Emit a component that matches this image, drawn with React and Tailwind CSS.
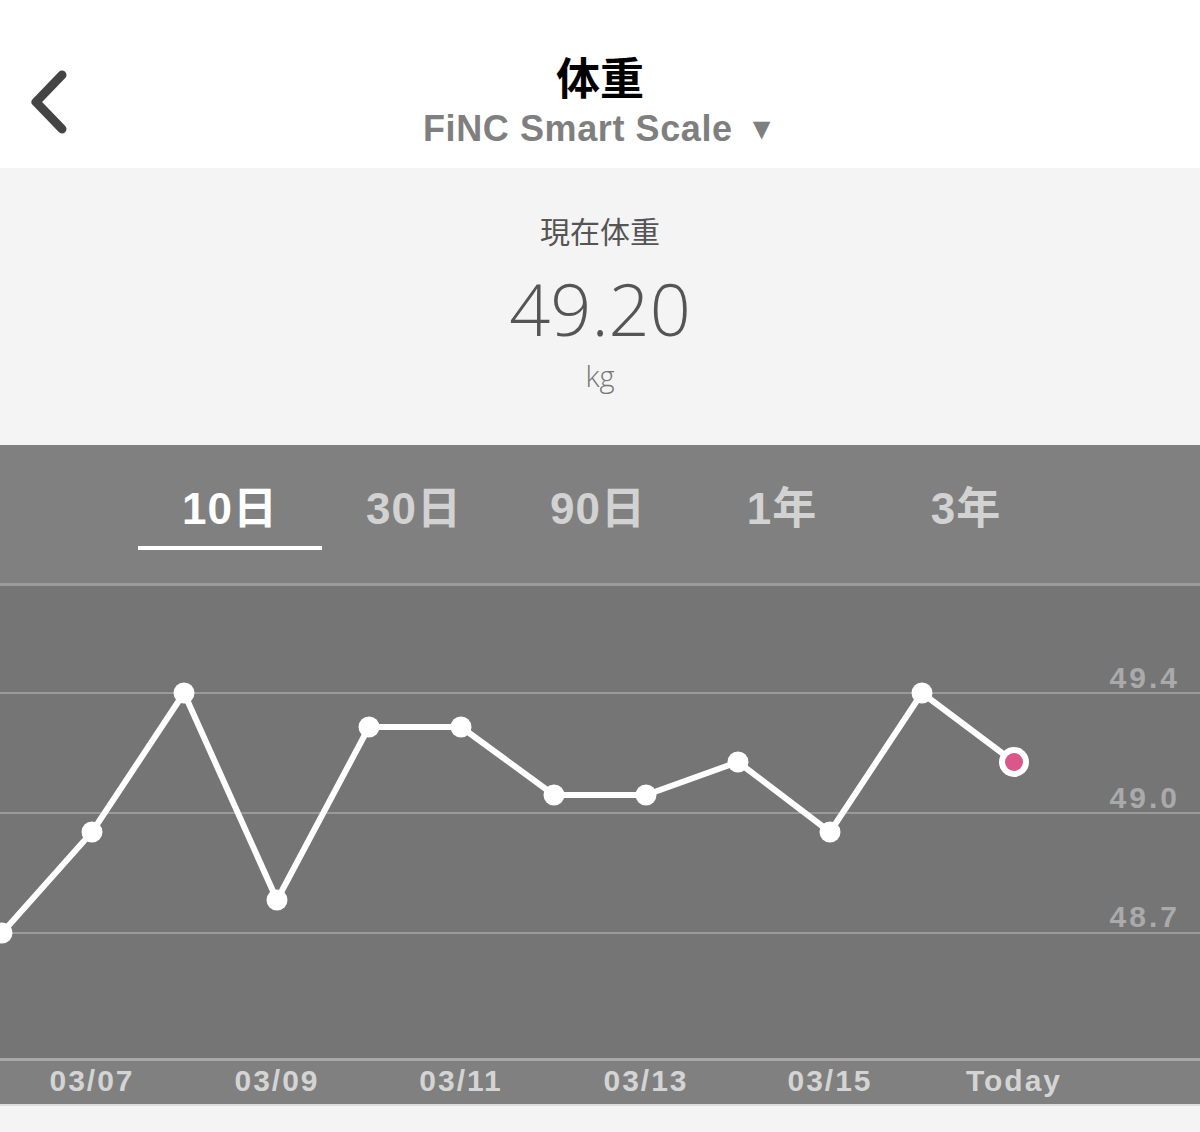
import React from "react";

const pts = [
  [2, 347], [92, 246], [184, 107], [277, 314], [369, 141], [461, 141],
  [554, 209], [646, 209], [738, 176], [830, 246], [922, 107], [1014, 176],
];

const tabs = ["10日", "30日", "90日", "1年", "3年"];
const axis = [
  ["03/07", 92], ["03/09", 277], ["03/11", 461], ["03/13", 646], ["03/15", 830], ["Today", 1014],
];

export default function App() {
  const font = { fontFamily: '"Liberation Sans", "Noto Sans CJK JP", sans-serif' };
  const light = { fontFamily: '"Open Sans", "Liberation Sans", sans-serif', fontWeight: 300 };
  return (
    <div className="w-[1200px] h-[1132px] bg-[#f4f4f4] overflow-hidden" style={font}>
      {/* Header */}
      <div className="relative h-[168px] bg-white flex flex-col items-center">
        <button className="absolute left-[24px] top-[66px] w-[48px] h-[72px] flex items-center justify-center">
          <svg width="48" height="72" viewBox="0 0 48 72">
            <path d="M38 9 L12 36 L38 63" fill="none" stroke="#444" strokeWidth="9" strokeLinecap="round" strokeLinejoin="round" />
          </svg>
        </button>
        <div className="mt-[52px] text-[44px] leading-[56px] font-bold text-black">体重</div>
        <div className="mt-[-2px] text-[36px] leading-[46px] font-semibold text-[#7f7f7f] tracking-[0.6px]">
          FiNC Smart Scale<span className="ml-[14px] text-[30px] align-[2px]">▼</span>
        </div>
      </div>

      {/* Current weight */}
      <div className="h-[277px] bg-[#f4f4f4] flex flex-col items-center">
        <div className="mt-[46px] text-[30px] leading-[38px] text-[#555]">現在体重</div>
        <div className="mt-[14px] text-[72px] leading-[84px] text-[#555]" style={light}>49.20</div>
        <div className="mt-[8px] text-[29px] leading-[36px] text-[#777]" style={light}>kg</div>
      </div>

      {/* Tabs */}
      <div className="h-[138px] bg-[#808080] flex pl-[138px]">
        {tabs.map((t, i) => (
          <div key={t} className="w-[184px] h-full relative flex justify-center">
            <div className={"mt-[39px] text-[44px] leading-[50px] font-bold tracking-[1px] " + (i === 0 ? "text-white" : "text-[#d2d2d2]")}>{t}</div>
            {i === 0 && <div className="absolute left-0 right-0 top-[101px] h-[4px] bg-white" />}
          </div>
        ))}
      </div>
      <div className="h-[3px] bg-[#9a9a9a]" />

      {/* Chart */}
      <div className="h-[472px] bg-[#757575]">
        <svg width="1200" height="472" viewBox="0 0 1200 472">
          {[107, 227, 347].map((y) => (
            <line key={y} x1="0" x2="1200" y1={y} y2={y} stroke="#9a9a9a" strokeWidth="2" />
          ))}
          <g fill="#aaaaaa" fontSize="30" fontWeight="bold" textAnchor="end" letterSpacing="3" fontFamily='"Liberation Sans", sans-serif'>
            <text x="1180" y="102">49.4</text>
            <text x="1180" y="222">49.0</text>
            <text x="1180" y="341">48.7</text>
          </g>
          <polyline
            points={pts.map((p) => p.join(",")).join(" ")}
            fill="none"
            stroke="#fff"
            strokeWidth="6"
            strokeLinejoin="round"
          />
          {pts.slice(0, -1).map(([x, y], i) => (
            <circle key={i} cx={x} cy={y} r="10.5" fill="#fff" />
          ))}
          <circle cx="1014" cy="176" r="15" fill="#fff" />
          <circle cx="1014" cy="176" r="9" fill="#d9578b" />
        </svg>
      </div>
      <div className="h-[3px] bg-[#a8a8a8]" />

      {/* Axis */}
      <div className="relative h-[45px] bg-[#808080] border-b-2 border-[#dcdcdc]">
        {axis.map(([t, x]) => (
          <div
            key={t}
            className="absolute top-[2px] w-[140px] ml-[-70px] text-center text-[30px] leading-[36px] font-bold tracking-[2px] text-[#d4d4d4]"
            style={{ left: x }}
          >
            {t}
          </div>
        ))}
      </div>
    </div>
  );
}
